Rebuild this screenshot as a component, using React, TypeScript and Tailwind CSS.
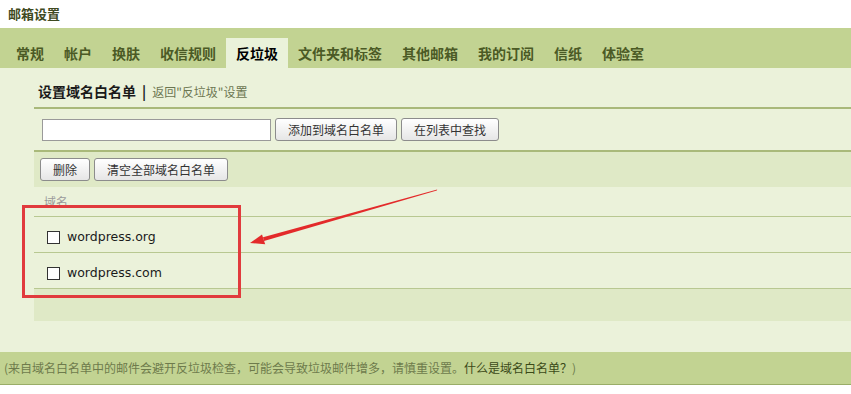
const tabs = ["常规", "帐户", "换肤", "收信规则", "反垃圾", "文件夹和标签", "其他邮箱", "我的订阅", "信纸", "体验室"];

const domains = ["wordpress.org", "wordpress.com"];

const Btn = ({ label }: { label: string }) => (
  <button className="h-[23px] px-[12px] rounded-[3px] border border-[#8c8c8c] bg-gradient-to-b from-white to-[#e6e6e6] text-[12px] text-[#333] leading-none">
    {label}
  </button>
);

const App = () => {
  return (
    <div
      className="relative w-[851px] h-[394px] bg-white overflow-hidden flex flex-col"
      style={{ fontFamily: '"Noto Sans CJK SC", "Liberation Sans", sans-serif' }}
    >
      {/* Page title */}
      <div className="h-[28px] flex items-center pl-[8px] text-[13px] font-bold text-[#3f4a22]">邮箱设置</div>

      {/* Tabs */}
      <nav className="h-[40px] bg-[#c2d392] flex items-end pl-[6px]">
        {tabs.map((t) => (
          <div
            key={t}
            className={
              t === "反垃圾"
                ? "h-[30px] px-[10px] flex items-center text-[14px] font-bold text-black bg-[#eaf2da]"
                : "h-[30px] px-[10px] flex items-center text-[14px] font-bold text-[#4b5a25]"
            }
          >
            {t}
          </div>
        ))}
      </nav>

      {/* Main */}
      <main className="h-[284px] bg-[#ebf2da] pl-[34px] flex flex-col">
        <div className="h-[39px] flex items-end pb-[5px] pl-[4px]">
          <span className="text-[14px] font-bold text-[#1a1a1a]">设置域名白名单</span>
          <span className="text-[14px] font-bold text-[#1a1a1a] mx-[6px]">|</span>
          <span className="text-[12px] leading-[20px] text-[#6b7651]">返回"反垃圾"设置</span>
        </div>

        <div className="border-t-2 border-[#a9b97a] h-[43px] flex items-center gap-[4px] pl-[8px]">
          <input className="w-[229px] h-[22px] bg-white border border-[#9a9a9a] outline-none" />
          <Btn label="添加到域名白名单" />
          <Btn label="在列表中查找" />
        </div>

        <div className="border-t-2 border-[#a9b97a] h-[37px] bg-[#dfe9c6] flex items-center gap-[4px] pl-[6px]">
          <Btn label="删除" />
          <Btn label="清空全部域名白名单" />
        </div>

        <div className="h-[30px] flex items-center pl-[10px] text-[12px] text-[#9a9a9a] border-b border-[#b8c891]">域名</div>

        {domains.map((d) => (
          <div key={d} className="h-[36px] flex items-center pt-[5px] pl-[13px] gap-[7px] border-b border-[#b8c891]">
            <span className="w-[13px] h-[13px] bg-white border border-[#333]" />
            <span className="text-[12.5px] text-[#1a1a1a]" style={{ fontFamily: '"DejaVu Sans", sans-serif' }}>
              {d}
            </span>
          </div>
        ))}

        <div className="h-[32px] bg-[#dfe9c6]" />
      </main>

      {/* Footer note */}
      <div className="h-[33px] bg-[#c2d392] border-b border-[#99ad67] flex items-center pl-[4px] text-[12px] text-[#6e7b4c]">
        (来自域名白名单中的邮件会避开反垃圾检查，可能会导致垃圾邮件增多，请慎重设置。
        <span className="text-[#3b4a18]">什么是域名白名单？</span>)
      </div>

      {/* Annotation */}
      <div className="absolute left-[22px] top-[205px] w-[219px] h-[93px] border-[3px] border-[#e13b3d]" />
      <svg className="absolute left-0 top-0" width="851" height="394">
        <polygon points="437.2,189.6 436.8,190.4 264.0,241.0 263.0,237.3" fill="#e32a2a" />
        <polygon points="250,243 265.2,244.3 262.0,234.4" fill="#e32a2a" />
      </svg>
    </div>
  );
};

export default App;
